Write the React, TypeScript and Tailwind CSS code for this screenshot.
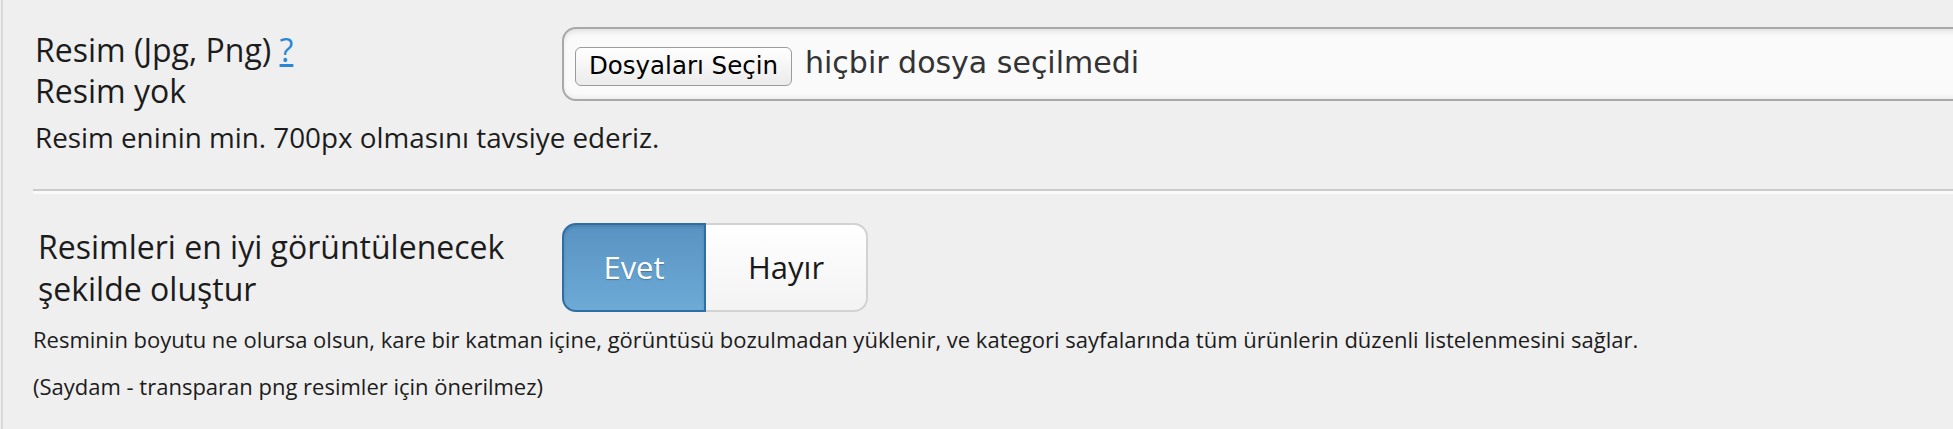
export default function App() {
  return (
    <div className="h-[429px] w-full overflow-hidden bg-[#efefef] font-['Open_Sans',sans-serif] text-[#1c1c1c]">
      <div className="ml-px h-full border-l-2 border-[#d9d9d9] pl-[30px] pt-[27px]">
        {/* image upload */}
        <div className="flex items-start">
          <div className="w-[529px] shrink-0 pl-[2px] pt-[2px] text-[32px] leading-[41px]">
            <div>
              Resim (Jpg, Png){' '}
              <a href="#" className="text-[#2a87d6] underline underline-offset-2">?</a>
            </div>
            <div>Resim yok</div>
          </div>
          <div className="-mr-[40px] flex h-[74px] flex-1 items-start rounded-l-[14px] border-2 border-[#a8a8a8] bg-[#fafafa] pl-[11px] pt-[18px] shadow-[inset_0_5px_6px_-3px_rgba(0,0,0,0.12),inset_0_-4px_6px_-3px_rgba(0,0,0,0.08)]">
            <button className="flex h-[39px] w-[217px] items-center justify-center rounded-[6px] border border-[#9c9c9c] bg-linear-to-b from-white to-[#ebebeb] font-['DejaVu_Sans',sans-serif] text-[24.5px] text-black">
              Dosyaları Seçin
            </button>
            <span className="ml-[13px] -mt-[2px] font-['DejaVu_Sans',sans-serif] text-[30px] leading-[36px] text-[#333]">
              hiçbir dosya seçilmedi
            </span>
          </div>
        </div>
        <p className="mt-[8px] pl-[2px] text-[27.8px] leading-[36px]">
          Resim eninin min. 700px olmasını tavsiye ederiz.
        </p>

        <div className="mt-[34px] h-0 border-t-2 border-b-[3px] border-t-[#cbcbcb] border-b-[#fafafa]" />

        {/* square layer option */}
        <div className="mt-[29px] flex items-center">
          <div className="w-[529px] shrink-0 pl-[5px] text-[32px] leading-[42px]">
            <div>Resimleri en iyi görüntülenecek</div>
            <div>şekilde oluştur</div>
          </div>
          <div className="flex h-[89px] w-[306px] text-[31px]">
            <button className="flex w-[144px] items-center justify-center rounded-l-[14px] border-2 border-[#2f6ea5] bg-linear-to-b from-[#5893c3] to-[#6eaad6] text-white shadow-[inset_0_2px_3px_rgba(0,0,0,0.12)] [text-shadow:0_1px_1px_rgba(0,0,0,0.25)]">
              Evet
            </button>
            <button className="flex flex-1 items-center justify-center rounded-r-[14px] border-2 border-l-0 border-[#d2d2d2] bg-linear-to-b from-white to-[#f3f3f3] text-[#1a1a1a]">
              Hayır
            </button>
          </div>
        </div>
        <p className="mt-[12px] text-[22px] leading-[30px]">
          Resminin boyutu ne olursa olsun, kare bir katman içine, görüntüsü bozulmadan yüklenir, ve kategori sayfalarında tüm ürünlerin düzenli listelenmesini sağlar.
        </p>
        <p className="mt-[17px] text-[22px] leading-[30px]">
          (Saydam - transparan png resimler için önerilmez)
        </p>
      </div>
    </div>
  );
}
